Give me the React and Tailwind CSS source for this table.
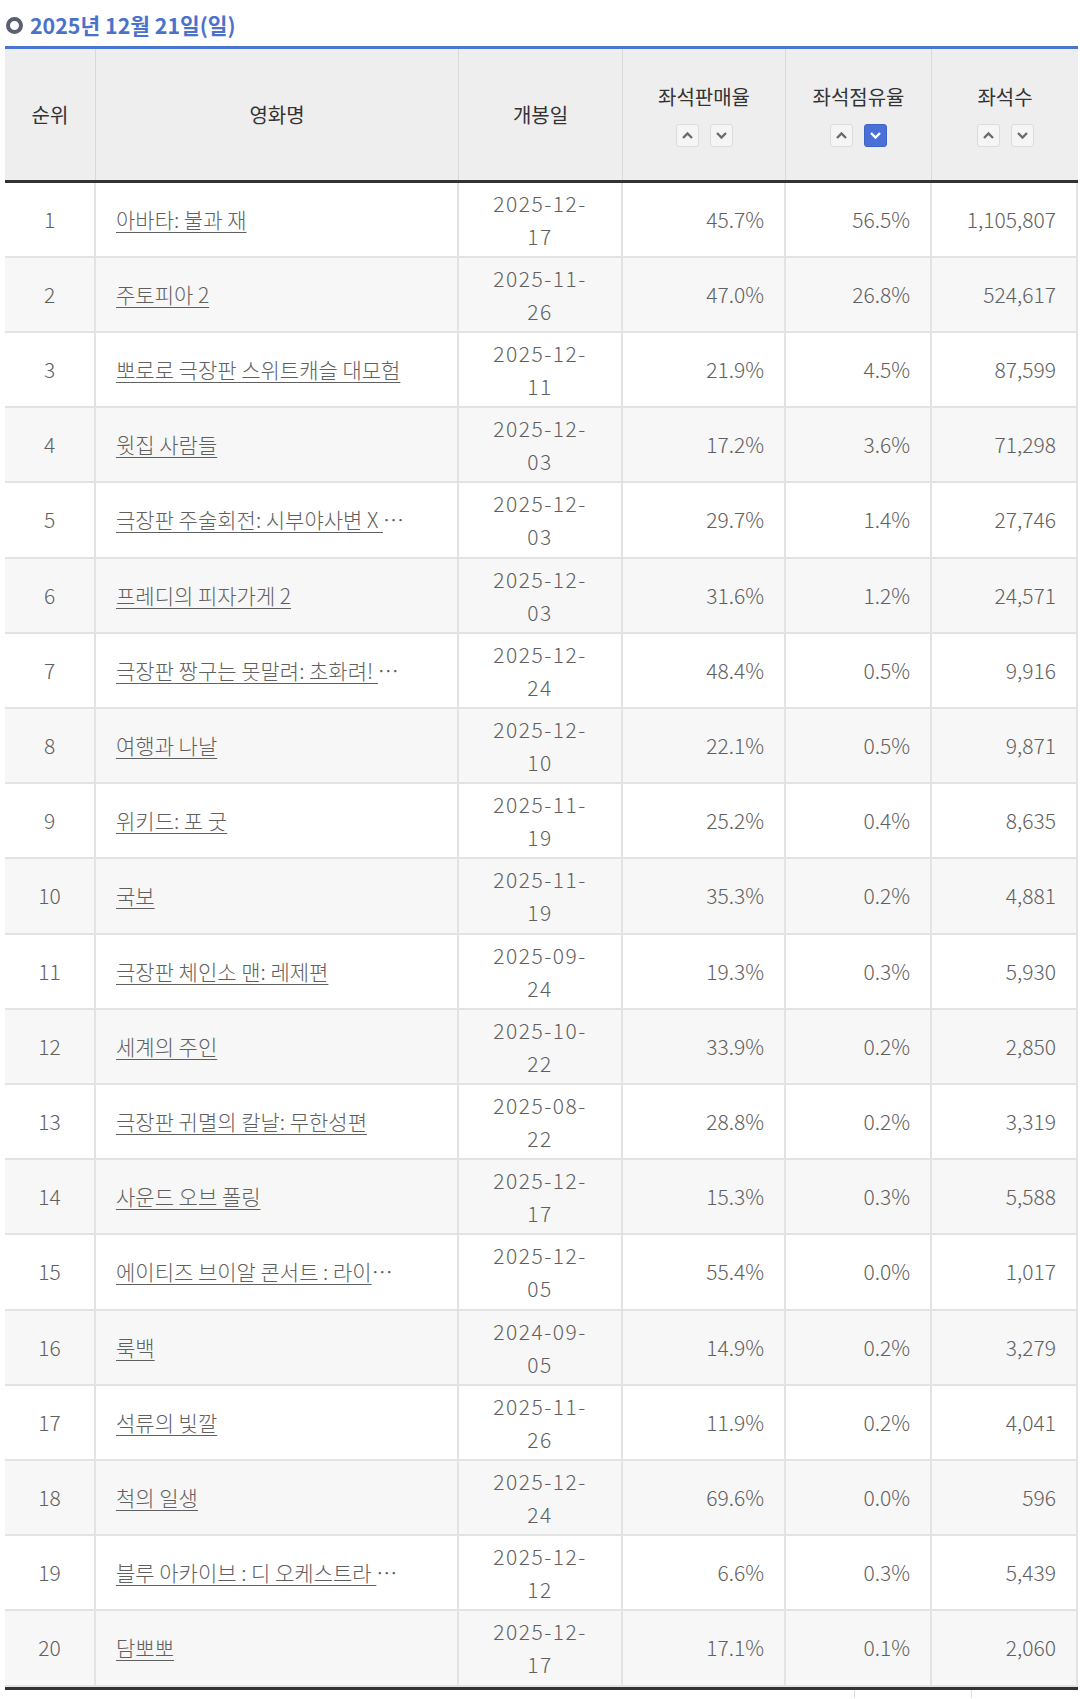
const rows = [
  ['1', '아바타: 불과 재', '2025-12-17', '45.7%', '56.5%', '1,105,807'],
  ['2', '주토피아 2', '2025-11-26', '47.0%', '26.8%', '524,617'],
  ['3', '뽀로로 극장판 스위트캐슬 대모험', '2025-12-11', '21.9%', '4.5%', '87,599'],
  ['4', '윗집 사람들', '2025-12-03', '17.2%', '3.6%', '71,298'],
  ['5', '극장판 주술회전: 시부야사변 X 사멸회유', '2025-12-03', '29.7%', '1.4%', '27,746'],
  ['6', '프레디의 피자가게 2', '2025-12-03', '31.6%', '1.2%', '24,571'],
  ['7', '극장판 짱구는 못말려: 초화려! 작열하는 떡잎마을 댄서즈', '2025-12-24', '48.4%', '0.5%', '9,916'],
  ['8', '여행과 나날', '2025-12-10', '22.1%', '0.5%', '9,871'],
  ['9', '위키드: 포 굿', '2025-11-19', '25.2%', '0.4%', '8,635'],
  ['10', '국보', '2025-11-19', '35.3%', '0.2%', '4,881'],
  ['11', '극장판 체인소 맨: 레제편', '2025-09-24', '19.3%', '0.3%', '5,930'],
  ['12', '세계의 주인', '2025-10-22', '33.9%', '0.2%', '2,850'],
  ['13', '극장판 귀멸의 칼날: 무한성편', '2025-08-22', '28.8%', '0.2%', '3,319'],
  ['14', '사운드 오브 폴링', '2025-12-17', '15.3%', '0.3%', '5,588'],
  ['15', '에이티즈 브이알 콘서트 : 라이트 더 웨이', '2025-12-05', '55.4%', '0.0%', '1,017'],
  ['16', '룩백', '2024-09-05', '14.9%', '0.2%', '3,279'],
  ['17', '석류의 빛깔', '2025-11-26', '11.9%', '0.2%', '4,041'],
  ['18', '척의 일생', '2025-12-24', '69.6%', '0.0%', '596'],
  ['19', '블루 아카이브 : 디 오케스트라 콘서트', '2025-12-12', '6.6%', '0.3%', '5,439'],
  ['20', '담뽀뽀', '2025-12-17', '17.1%', '0.1%', '2,060'],
]

const font = { fontFamily: "'Noto Sans CJK KR', 'Noto Sans', sans-serif" }

function SortBtn({ up, active }) {
  return (
    <span
      className={`flex h-[23px] w-[23px] items-center justify-center rounded-[3px] border ${
        active ? 'border-[#3e63c8] bg-[#4a70d8]' : 'border-[#dcdcdc] bg-[#f5f5f5]'
      }`}
    >
      <svg width="13" height="9" viewBox="0 0 13 9">
        <path
          d={up ? 'M2 7 6.5 2.5 11 7' : 'M2 2 6.5 6.5 11 2'}
          fill="none"
          stroke={active ? '#fff' : '#6b6b6b'}
          strokeWidth="2.4"
        />
      </svg>
    </span>
  )
}

function Head({ label, sort, last }) {
  return (
    <div className={`flex flex-col items-center justify-center gap-[12px] ${last ? '' : 'border-r border-[#d9d9d9]'}`}>
      <span className="leading-[30px]">{label}</span>
      {sort && (
        <div className="flex gap-[11px]">
          <SortBtn up />
          <SortBtn active={sort === 'down'} />
        </div>
      )}
    </div>
  )
}

const cols = 'grid grid-cols-[91px_363px_164px_163px_146px_146px]'

export default function App() {
  return (
    <div className="w-[1080px] bg-white pl-[5px] text-[#606060]" style={font}>
      <div className="flex h-[46px] items-center gap-[7px] pl-[1px] pt-[4px]">
        <span className="h-[17px] w-[17px] rounded-full border-[4px] border-[#5a6072]" />
        <span className="text-[21.4px] font-bold leading-[30px] text-[#4a72cc]">
          2025년 12월 21일(일)
        </span>
      </div>

      <div className="w-[1073px] border-t-[3px] border-[#4a76d0]">
        <div className={`${cols} h-[134px] border-b-[3px] border-[#333] bg-[#eeeeee] text-[20px] text-[#333]`}>
          <Head label="순위" />
          <Head label="영화명" />
          <Head label="개봉일" />
          <Head label="좌석판매율" sort="none" />
          <Head label="좌석점유율" sort="down" />
          <Head label="좌석수" sort="none" last />
        </div>

        {rows.map((r, i) => (
          <div
            key={r[0]}
            className={`${cols} ${i % 5 === 4 ? 'h-[76px]' : 'h-[75px]'} border-b-2 border-[#e3e3e3] text-[21px] font-light ${
              i % 2 ? 'bg-[#f7f7f7]' : 'bg-white'
            }`}
          >
            <div className="flex items-center justify-center border-r-2 border-[#e3e3e3]">{r[0]}</div>
            <div className="flex items-center border-r-2 border-[#e3e3e3] pl-[20px]">
              <div className="w-[290px] truncate">
                <a href="#" className="underline decoration-1 underline-offset-[4px]">{r[1]}</a>
              </div>
            </div>
            <div className="flex items-center justify-center border-r-2 border-[#e3e3e3] text-center leading-[33px] tracking-[1.5px]">
              <div>
                {r[2].slice(0, 8)}
                <br />
                {r[2].slice(8)}
              </div>
            </div>
            <div className="flex items-center justify-end border-r-2 border-[#e3e3e3] pr-[20px]">{r[3]}</div>
            <div className="flex items-center justify-end border-r-2 border-[#e3e3e3] pr-[20px]">{r[4]}</div>
            <div className="flex items-center justify-end border-r-2 border-[#e3e3e3] pr-[20px]">{r[5]}</div>
          </div>
        ))}
        <div className="h-[3px] bg-[#333]" />
      </div>
      <div className="ml-[849px] h-[8px] w-[118px] border-x border-[#dddddd]" />
    </div>
  )
}
